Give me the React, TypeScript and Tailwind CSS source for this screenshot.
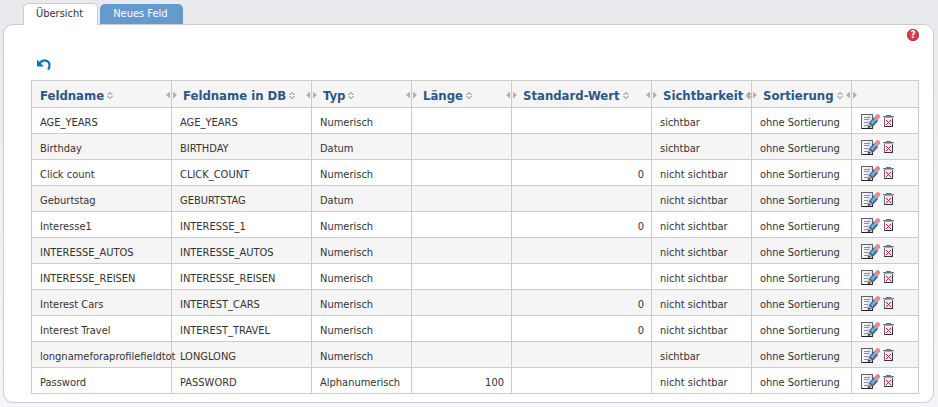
import React from "react";

type Field = {
  name: string;
  db: string;
  type: string;
  length?: string;
  value?: string;
  visibility: string;
  sorting: string;
};

const HIDDEN = "nicht sichtbar";
const NO_SORT = "ohne Sortierung";

const fields: Field[] = [
  { name: "AGE_YEARS", db: "AGE_YEARS", type: "Numerisch", visibility: "sichtbar", sorting: NO_SORT },
  { name: "Birthday", db: "BIRTHDAY", type: "Datum", visibility: "sichtbar", sorting: NO_SORT },
  { name: "Click count", db: "CLICK_COUNT", type: "Numerisch", value: "0", visibility: HIDDEN, sorting: NO_SORT },
  { name: "Geburtstag", db: "GEBURTSTAG", type: "Datum", visibility: HIDDEN, sorting: NO_SORT },
  { name: "Interesse1", db: "INTERESSE_1", type: "Numerisch", value: "0", visibility: HIDDEN, sorting: NO_SORT },
  { name: "INTERESSE_AUTOS", db: "INTERESSE_AUTOS", type: "Numerisch", visibility: HIDDEN, sorting: NO_SORT },
  { name: "INTERESSE_REISEN", db: "INTERESSE_REISEN", type: "Numerisch", visibility: HIDDEN, sorting: NO_SORT },
  { name: "Interest Cars", db: "INTEREST_CARS", type: "Numerisch", value: "0", visibility: HIDDEN, sorting: NO_SORT },
  { name: "Interest Travel", db: "INTEREST_TRAVEL", type: "Numerisch", value: "0", visibility: HIDDEN, sorting: NO_SORT },
  { name: "longnameforaprofilefieldtot", db: "LONGLONG", type: "Numerisch", visibility: "sichtbar", sorting: NO_SORT },
  { name: "Password", db: "PASSWORD", type: "Alphanumerisch", length: "100", visibility: HIDDEN, sorting: NO_SORT },
];

const columns = [
  { label: "Feldname", width: "w-[140px]" },
  { label: "Feldname in DB", width: "w-[140px]" },
  { label: "Typ", width: "w-[100px]" },
  { label: "Länge", width: "w-[100px]" },
  { label: "Standard-Wert", width: "w-[140px]" },
  { label: "Sichtbarkeit", width: "w-[100px]" },
  { label: "Sortierung", width: "w-[100px]" },
];

function SortIcon() {
  return (
    <svg width="6" height="8" viewBox="0 0 6 8" fill="#b8b8b8" className="shrink-0" aria-hidden="true">
      <path d="M2 0h2v1H2Z M1 1h4v1H1Z M0 2h2v1H0Z M4 2h2v1H4Z M0 4h2v1H0Z M4 4h2v1H4Z M1 5h4v1H1Z M2 6h2v1H2Z" />
    </svg>
  );
}

function ResizeHandle() {
  return (
    <span className="absolute top-1/2 -right-1.5 z-10 flex -translate-y-1/2 cursor-col-resize pt-0.5">
      <svg width="11" height="7" viewBox="0 0 11 7" fill="#b0b0b0" aria-hidden="true">
        <path d="M4 0v7L0 3.5Z M7 0v7l4-3.5Z" />
      </svg>
    </span>
  );
}

function EditIcon() {
  return (
    <svg width="19" height="16" viewBox="0 0 19 16" aria-hidden="true">
      <path d="M0 0h12v15H0Z" fill="#5b6172" />
      <path d="M1 1h10v13H1Z" fill="#f3f5fa" />
      <path d="M7 1h4v13H5Z" fill="#dfe3ee" />
      <path d="M11 8h1v7H1v-1h10Z" fill="#1d1f33" />
      <path d="M3 3h6v1H3Z M3 5h5v1H3Z M3 8h4v1H3Z M3 11h4v1H3Z" fill="#8a8f9e" />
      <path d="M7.5 13.5 8 9 13 3.2 17.2 6.8 12 12.6Z" fill="#27406e" />
      <path d="M8.8 9 13.2 4 16.2 6.6 11.6 11.6Z" fill="#4f8fd0" />
      <path d="M10.4 9 14 4.8 14.9 5.6 11.2 9.8Z" fill="#8ec0ec" />
      <path d="M8 9.4 11.6 12.4 7.6 13.6Z" fill="#e3b478" />
      <path d="M7.2 14 7.6 11.4 9.8 13.1Z" fill="#20202c" />
      <path d="M12.4 3.8 14 2 17.6 5.2 16.2 7Z" fill="#c3a08f" />
      <path d="M13.8 2.4 15.6 .2h2.2L19 1.4v2L17.4 5.3Z" fill="#e28a92" />
    </svg>
  );
}

function TrashIcon() {
  return (
    <svg width="11" height="16" viewBox="0 -1 11 16" aria-hidden="true">
      <path d="M3 0h5v1H3Z M0 1h11v1H0Z" fill="#6d7380" />
      <path d="M1 2h9v1H1Z" fill="#a3a8b2" />
      <path d="M1 3h9v9H1Z" fill="#666b78" />
      <path d="M2 3h7v8H2Z" fill="#f4eef0" />
      <path d="M9 4h1v8H1v-1h8Z" fill="#30333f" />
      <path
        d="M3 5h1v1H3Z M7 5h1v1H7Z M4 6h1v1H4Z M6 6h1v1H6Z M5 7h1v1H5Z M4 8h1v1H4Z M6 8h1v1H6Z M3 9h1v1H3Z M7 9h1v1H7Z"
        fill="#d1152f"
      />
    </svg>
  );
}

function UndoIcon() {
  return (
    <svg width="14" height="12" viewBox="0 0 14 12" aria-hidden="true">
      <path d="M0 .5v7h7L4.6 5.2Z" fill="#0b76bd" />
      <path d="M2.6 4.2C5.4 .6 10 .6 11.8 3.6c1.2 2.2.8 4.6-.6 7" fill="none" stroke="#0b76bd" strokeWidth="2.2" />
    </svg>
  );
}

function HelpButton() {
  return (
    <button
      type="button"
      aria-label="Hilfe"
      className="flex size-3 items-center justify-center rounded-full bg-[#e8354f] text-[10px] leading-3 font-bold text-white outline-1 -outline-offset-1 outline-[#8d4655]"
    >
      ?
    </button>
  );
}

export default function App() {
  return (
    <div className="min-h-screen bg-linear-to-b from-[#e9eaee] to-[#f4f5f9] pt-[3px] pr-1 pb-1 pl-[3px] font-['DejaVu_Sans_Condensed','DejaVu_Sans',sans-serif] text-[11px] leading-4 text-[#333]">
      <nav className="-mb-px flex items-end gap-0.5 pl-5">
        <button
          type="button"
          className="h-[22px] rounded-t-[5px] border border-b-0 border-[#ccc] bg-white pr-[14px] pb-px pl-3"
        >
          Übersicht
        </button>
        <button
          type="button"
          className="mb-px h-5 rounded-t-[5px] bg-[#6699cc] pr-[15px] pl-[13px] text-white"
        >
          Neues Feld
        </button>
      </nav>

      <main className="rounded-[10px] border border-[#ccc] bg-white pr-[14px] pb-2 pl-[27px]">
        <div className="flex h-[34px] justify-end pt-1">
          <HelpButton />
        </div>
        <button type="button" aria-label="Zurücksetzen" className="ml-1.5 flex h-[21px] items-start">
          <UndoIcon />
        </button>

        <table className="w-full table-fixed border-collapse">
          <colgroup>
            {columns.map((c) => (
              <col key={c.label} className={c.width} />
            ))}
            <col />
          </colgroup>
          <thead>
            <tr className="h-[27px] bg-[#f5f5f5]">
              {columns.map((c, i) => (
                <th key={c.label} className={`relative border border-[#ccc] pt-1 pb-0 ${i === 0 ? "pl-2" : "pl-[11px]"}`}>
                  <button
                    type="button"
                    className="flex items-center gap-[3px] text-[13px] font-bold whitespace-nowrap text-[#2b5788]"
                  >
                    {c.label}
                    <SortIcon />
                  </button>
                  <ResizeHandle />
                </th>
              ))}
              <th className="border border-[#ccc]" aria-label="Aktionen" />
            </tr>
          </thead>
          <tbody>
            {fields.map((f) => (
              <tr
                key={f.db}
                className="h-[26px] even:bg-[#f5f5f5] [&>td]:border [&>td]:border-[#ccc] [&>td]:pt-[5px] [&>td]:pb-0 [&>td]:pl-2 [&>td]:whitespace-nowrap"
              >
                <td>{f.name}</td>
                <td>{f.db}</td>
                <td>{f.type}</td>
                <td className="pr-[7px] text-right">{f.length}</td>
                <td className="pr-[7px] text-right">{f.value}</td>
                <td>{f.visibility}</td>
                <td>{f.sorting}</td>
                <td>
                  <div className="flex items-center gap-[3px] pb-0.5 pl-px">
                    <button type="button" aria-label={`${f.name} bearbeiten`}>
                      <EditIcon />
                    </button>
                    <button type="button" aria-label={`${f.name} löschen`}>
                      <TrashIcon />
                    </button>
                  </div>
                </td>
              </tr>
            ))}
          </tbody>
        </table>
      </main>
    </div>
  );
}
